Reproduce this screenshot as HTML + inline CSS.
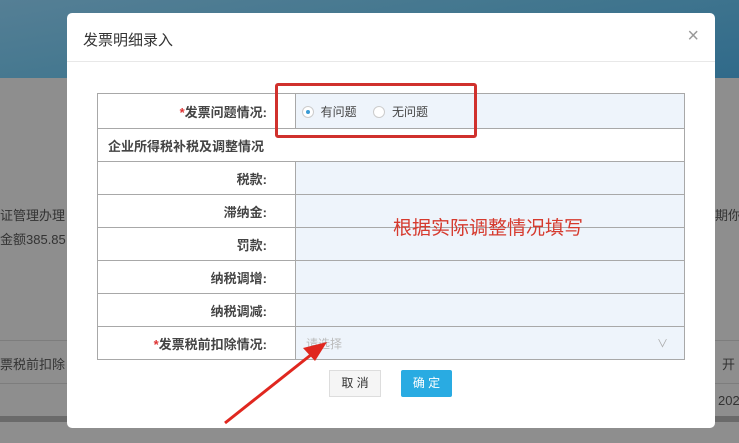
<!DOCTYPE html>
<html><head><meta charset="utf-8"><style>
*{margin:0;padding:0;box-sizing:border-box}
body{width:739px;height:443px;overflow:hidden;position:relative;background:#8e8e8e;font-family:"Liberation Sans","Noto Sans CJK SC",sans-serif;}
.top{position:absolute;left:0;top:0;width:739px;height:78px;background:linear-gradient(170deg,#557f95 0%,#43778f 45%,#306a8a 100%)}
.bg{position:absolute;color:#333;font-size:13px;white-space:nowrap}
.line{position:absolute;left:0;width:739px;height:1px;background:#7d7d7d}
.modal{position:absolute;left:67px;top:13px;width:648px;height:415px;background:#fff;border-radius:5px}
.title{position:absolute;left:16px;top:16px;font-size:15px;color:#333}
.close{position:absolute;right:16px;top:12px;font-size:20px;color:#999}
.hl{position:absolute;left:0;top:48px;width:648px;height:1px;background:#e8e8e8}
table{position:absolute;left:30px;top:80px;width:588px;border-collapse:collapse;font-size:13px}
td{border:1px solid #a8a8a8;height:33px}
td.l{width:198px;text-align:right;padding-right:28px;font-weight:bold;color:#444}
td.v{background:#eef4fb}
.req{color:#d33}
</style></head><body>
<div class="top"></div>
<div class="bg" style="left:0;top:205px">证管理办理</div>
<div class="bg" style="left:0;top:229px">金额385.85</div>
<div class="bg" style="left:0;top:354px">票税前扣除</div>
<div class="bg" style="left:715px;top:205px">期你</div>
<div class="bg" style="left:722px;top:354px">开</div>
<div class="bg" style="left:718px;top:393px">202</div>
<div class="line" style="top:340px"></div>
<div class="line" style="top:383px"></div>
<div style="position:absolute;left:0;top:416px;width:739px;height:6px;background:#6a6a6a"></div>
<div class="modal">
<div class="title">发票明细录入</div>
<div class="close">×</div>
<div class="hl"></div>
<table>
<tr><td class="l" style="height:35px"><span class="req">*</span>发票问题情况:</td><td class="v" style="font-weight:normal;color:#444;padding-left:6px;font-size:12px">
<span style="display:inline-block;width:12px;height:12px;border:1px solid #ccc;border-radius:50%;background:#fff;vertical-align:-2px;position:relative"><span style="position:absolute;left:3px;top:3px;width:4px;height:4px;border-radius:50%;background:#3a9bd5"></span></span>&nbsp; 有问题&nbsp;&nbsp;&nbsp;&nbsp;
<span style="display:inline-block;width:12px;height:12px;border:1px solid #ccc;border-radius:50%;background:#fff;vertical-align:-2px"></span>&nbsp; 无问题</td></tr>
<tr><td colspan="2" style="font-weight:bold;color:#444;padding-left:10px">企业所得税补税及调整情况</td></tr>
<tr><td class="l">税款:</td><td class="v"></td></tr>
<tr><td class="l">滞纳金:</td><td class="v"></td></tr>
<tr><td class="l">罚款:</td><td class="v"></td></tr>
<tr><td class="l">纳税调增:</td><td class="v"></td></tr>
<tr><td class="l">纳税调减:</td><td class="v"></td></tr>
<tr><td class="l"><span class="req">*</span>发票税前扣除情况:</td><td class="v" style="color:#bbb;padding-left:10px;position:relative;font-size:12px">请选择<span style="position:absolute;right:16px;top:8px;color:#aaa;font-size:11px">∨</span></td></tr>
</table>
<div style="position:absolute;left:262px;top:357px;width:52px;height:27px;border:1px solid #ddd;background:#f5f5f5;font-size:12px;color:#333;text-align:center;line-height:25px">取 消</div>
<div style="position:absolute;left:334px;top:357px;width:51px;height:27px;background:#29abe2;font-size:12px;color:#fff;text-align:center;line-height:27px;border-radius:2px">确 定</div>
<div style="position:absolute;left:326px;top:200px;font-size:19px;color:#d63a2e">根据实际调整情况填写</div>
</div>
<div style="position:absolute;left:275px;top:83px;width:202px;height:55px;border:3px solid #d0312d;border-radius:3px"></div>
<svg style="position:absolute;left:0;top:0" width="739" height="443"><line x1="225" y1="423" x2="312" y2="354" stroke="#e0271f" stroke-width="3"/><polygon points="327,342 303,348 315,361" fill="#e0271f"/></svg>
</body></html>
